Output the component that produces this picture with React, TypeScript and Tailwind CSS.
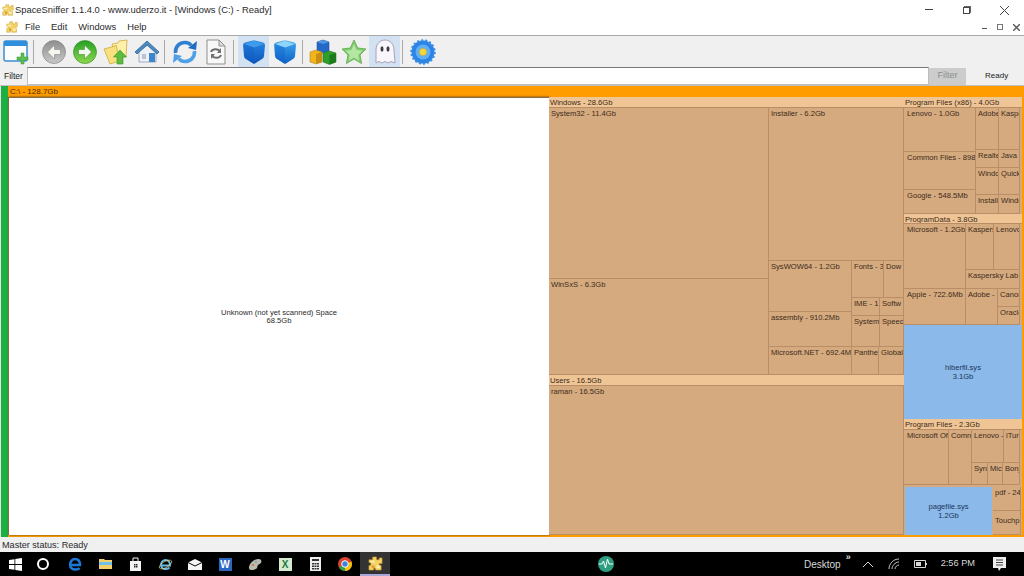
import React from "react";

const Puzzle = ({ size = 16 }: { size?: number }) => (
  <svg width={size} height={size} viewBox="0 0 16 16">
    <path d="M5 1h4v3h3V2h3v6h-3v2h2v5H8v-2H6v2H1v-5h2V7H1V4h4z" fill="#f4d264" stroke="#c9972a" strokeWidth="0.6" />
    <path d="M2 5h5v2H2zM9 10h4v3H9z" fill="#fdf0b0" />
    <path d="M4 10h3v3H4z" fill="#d8a030" />
  </svg>
);

const NewWindowIcon = () => (
  <svg width="26" height="26" viewBox="0 0 26 26">
    <rect x="1" y="2" width="23" height="20" rx="2" fill="#fdfdff" stroke="#3b8fd2" strokeWidth="1.5" />
    <rect x="1" y="2" width="23" height="5" rx="1" fill="#2f8fdc" />
    <path d="M18 14h3v4h4v3h-4v4h-3v-4h-4v-3h4z" fill="#5cc14e" stroke="#2f9030" strokeWidth="0.5" />
  </svg>
);

const ArrowCircle = ({ id, light, dark, ring, dir }: { id: string; light: string; dark: string; ring: string; dir: "l" | "r" }) => (
  <svg width="24" height="24" viewBox="0 0 24 24">
    <defs>
      <linearGradient id={id} x1="0" y1="0" x2="0" y2="1">
        <stop offset="0" stopColor={dark} />
        <stop offset="1" stopColor={light} />
      </linearGradient>
    </defs>
    <circle cx="12" cy="12" r="11.5" fill={`url(#${id})`} stroke={ring} strokeWidth="0.6" />
    <path d={dir === "l" ? "M12.5 5L5.5 12l7 7v-4.500H18.5v-5H12.5z" : "M11.5 5l7 7-7 7v-4.500H5.5v-5h6z"} fill="#f4f6f0" stroke={ring} strokeWidth="0.5" />
  </svg>
);

const FolderUp = () => (
  <svg width="26" height="26" viewBox="0 0 26 26">
    <path d="M9 5l6-1 1-2 8-1-1 17H12z" fill="#fdf0a8" stroke="#cfa93f" strokeWidth="0.8" />
    <path d="M1 10l11-3 1-1 4 16-10 3z" fill="#f9e07e" stroke="#cfa93f" strokeWidth="0.8" />
    <path d="M17 11l6.5 7H20v7h-6v-7h-3.500z" fill="#5cbc40" stroke="#3b942c" strokeWidth="0.6" />
  </svg>
);

const HomeIcon = () => (
  <svg width="26" height="24" viewBox="0 0 26 24">
    <path d="M5 11l9-6 8 6v11H5z" fill="#eef1f6" stroke="#8c9cb2" strokeWidth="0.8" />
    <path d="M1 12L13 1l12 11-2 2L13 5 3 14z" fill="#4d8ac0" stroke="#2f6596" strokeWidth="0.8" />
    <path d="M8 14h4v5H8z" fill="#b9c4d0" />
    <path d="M15 13h6v9h-6z" fill="#3d86cc" />
  </svg>
);

const RefreshIcon = () => (
  <svg width="26" height="26" viewBox="0 0 26 26" fill="none">
    <path d="M3.5 14C3 7 8 3.5 13 3.5c3 0 5 1 6 3" stroke="#2f7fd0" strokeWidth="3.6" />
    <path d="M25 2l-1 9-8-2z" fill="#1f6cc0" />
    <path d="M22.5 12c.5 7-4.500 10.500-9.500 10.500-3 0-5-1-6-3" stroke="#4f9fe6" strokeWidth="3.6" />
    <path d="M1 24l1-9 8 2z" fill="#4f9fe6" />
  </svg>
);

const DocRefresh = () => (
  <svg width="22" height="26" viewBox="0 0 22 26" fill="none">
    <path d="M2 1h12l6 6v18H2z" fill="#f8f8f8" stroke="#8f8f8f" />
    <path d="M14 1v6h6z" fill="#ddd" stroke="#8f8f8f" />
    <path d="M6 13c1-3 6-4 9-1M16 16c-1 3-6 4-9 1" stroke="#6f6f6f" strokeWidth="2" />
    <path d="M16 9v5h-4zM6 20v-5h4z" fill="#6f6f6f" />
  </svg>
);

const Cube = ({ id, top, mid, low }: { id: string; top: string; mid: string; low: string }) => (
  <svg width="24" height="26" viewBox="0 0 24 26">
    <defs>
      <linearGradient id={id} x1="0" y1="0" x2="0" y2="1">
        <stop offset="0" stopColor={mid} />
        <stop offset="1" stopColor={low} />
      </linearGradient>
    </defs>
    <path d="M1 6Q1 4 3 3.5L11 1.5Q12 1.3 13 1.5L21 3.5Q23 4 23 6L22 17Q22 19 20 20L13 24.5Q12 25 11 24.5L4 20Q2 19 2 17z" fill={`url(#${id})`} />
    <path d="M2 5L12 1.8 22 5 12 8.5z" fill={top} />
    <path d="M12 8.5V24.5L4 20Q2.5 19 2.5 17L2 5z" fill="#0f5fc6" fillOpacity="0.35" />
  </svg>
);

const BoxesIcon = () => (
  <svg width="28" height="26" viewBox="0 0 28 26">
    <path d="M8 3l6-2 6 2v9l-6 2-6-2z" fill="#2468c8" stroke="#17488c" strokeWidth="0.5" />
    <path d="M8 3l6 2 6-2-6-2z" fill="#4f96e4" />
    <path d="M1 13l6-2 6 2v10l-6 2-6-2z" fill="#f0b41c" stroke="#a87a10" strokeWidth="0.5" />
    <path d="M7 15l6-2v10l-6 2z" fill="#c98e10" />
    <path d="M14 14l6.5-2L27 14v9l-6.500 2.500L14 23z" fill="#2f9f2a" stroke="#1c6a18" strokeWidth="0.5" />
    <path d="M20.5 16L27 14v9l-6.500 2.500z" fill="#1c7a1c" />
  </svg>
);

const StarIcon = () => (
  <svg width="26" height="25" viewBox="0 0 26 25">
    <path d="M13 1l3.7 8 8.3 1-6 6 1.6 8.5L13 20l-7.600 4.500L7 16 1 10l8.300-1z" fill="#7ecb70" stroke="#6fb35e" strokeLinejoin="round" />
    <path d="M13 5l2.6 6 5.9.7-4.300 4.100 1.100 6L13 18.500l-5.300 3.300 1.100-6-4.300-4.100 5.900-.7z" fill="#b6e6a4" />
  </svg>
);

const GhostIcon = () => (
  <svg width="22" height="26" viewBox="0 0 22 26">
    <path d="M2 24V11C2 5 6 1 11 1s9 4 9 10l1 13-4-1.500-3 1.500-3-1.500-3 1.500-3-1.500z" fill="#f8f6fb" stroke="#a8a2b8" />
    <ellipse cx="8" cy="10" rx="1.5" ry="2.8" fill="#3a3a44" />
    <ellipse cx="14" cy="10" rx="1.5" ry="2.8" fill="#3a3a44" />
  </svg>
);

const FlowerIcon = () => (
  <svg width="26" height="26" viewBox="0 0 26 26">
    <circle cx="13" cy="13" r="11.5" fill="#2b84e6" />
    <circle cx="13" cy="13" r="11.5" fill="none" stroke="#3a8ee6" strokeWidth="2.5" strokeDasharray="2 2" />
    <circle cx="13" cy="13" r="7.5" fill="#62aef2" />
    <circle cx="13" cy="13" r="3.6" fill="#f6d83a" stroke="#d8a520" strokeWidth="0.5" />
  </svg>
);

const Btn = ({ children, active }: { children: React.ReactNode; active?: boolean }) => (
  <div className={active ? "w-[31px] h-[31px] flex items-center justify-center bg-[#d2e2f2]" : "w-[31px] h-[31px] flex items-center justify-center"}>
    {children}
  </div>
);

const Sep = () => <div className="w-px h-[24px] ml-[2px] mr-[4px] bg-[#a9a9a9]" />;

const Cell = ({ label, className }: { label: string; className: string }) => (
  <div className={`${className} shrink-0 border-r border-b border-[#b98e66] bg-[#d6aa7f] pl-[2px] text-[7.6px] leading-[11px] text-[#3a2a1a] overflow-hidden whitespace-nowrap`}>
    {label}
  </div>
);

const Head = ({ label, className }: { label: string; className: string }) => (
  <div className={`${className} shrink-0 border-b border-[#b98e66] bg-[#f0c595] pl-px text-[7.6px] leading-[11px] text-[#3a2a1a] overflow-hidden whitespace-nowrap`}>
    {label}
  </div>
);

const FileBlock = ({ name, size, className }: { name: string; size: string; className: string }) => (
  <div className={`${className} shrink-0 flex flex-col items-center justify-center bg-[#8ab9ea] text-[7.6px] leading-[9px] text-[#1d3557]`}>
    <span>{name}</span>
    <span>{size}</span>
  </div>
);

const WindowsBlock = () => (
  <div className="w-[355px] flex flex-col bg-[#d6aa7f]">
    <Head label="Windows - 28.6Gb" className="h-[11px]" />
    <div className="flex h-[267px]">
      <div className="w-[220px] flex flex-col">
        <Cell label="System32 - 11.4Gb" className="h-[171px]" />
        <Cell label="WinSxS - 6.3Gb" className="h-[96px]" />
      </div>
      <div className="w-[135px] flex flex-col">
        <Cell label="Installer - 6.2Gb" className="h-[153px]" />
        <div className="flex h-[114px]">
          <div className="w-[83px] flex flex-col">
            <Cell label="SysWOW64 - 1.2Gb" className="h-[51px]" />
            <Cell label="assembly - 910.2Mb" className="h-[35px]" />
            <Cell label="Microsoft.NET - 692.4Mb" className="h-[28px]" />
          </div>
          <div className="w-[52px] flex flex-col">
            <div className="flex h-[37px]">
              <Cell label="Fonts - 3" className="w-[32px]" />
              <Cell label="Dow" className="w-[20px]" />
            </div>
            <div className="flex h-[18px]">
              <Cell label="IME - 1" className="w-[28px]" />
              <Cell label="Softw" className="w-[24px]" />
            </div>
            <div className="flex h-[31px]">
              <Cell label="System" className="w-[28px]" />
              <Cell label="Speec" className="w-[24px]" />
            </div>
            <div className="flex h-[28px]">
              <Cell label="Panthe" className="w-[27px]" />
              <Cell label="Global" className="w-[25px]" />
            </div>
          </div>
        </div>
      </div>
    </div>
    <Head label="Users - 16.5Gb" className="h-[11px]" />
    <Cell label="raman - 16.5Gb" className="h-[149px]" />
  </div>
);

const SideBlock = () => (
  <div className="w-[118px] flex flex-col bg-[#d6aa7f]">
    <Head label="Program Files (x86) - 4.0Gb" className="h-[11px] pl-[2px]" />
    <div className="flex h-[106px]">
      <div className="w-[72px] flex flex-col">
        <Cell label="Lenovo - 1.0Gb" className="h-[44px] pl-[3px]" />
        <Cell label="Common Files - 898" className="h-[38px] pl-[3px]" />
        <Cell label="Google - 548.5Mb" className="h-[24px] pl-[3px]" />
      </div>
      <div className="w-[44px] flex flex-col">
        <div className="flex h-[42px]">
          <Cell label="Adobe" className="w-[23px]" />
          <Cell label="Kaspe" className="w-[21px]" />
        </div>
        <div className="flex h-[18px]">
          <Cell label="Realte" className="w-[23px]" />
          <Cell label="Java -" className="w-[21px]" />
        </div>
        <div className="flex h-[27px]">
          <Cell label="Windov" className="w-[23px]" />
          <Cell label="Quick" className="w-[21px]" />
        </div>
        <div className="flex h-[19px]">
          <Cell label="InstallS" className="w-[23px]" />
          <Cell label="Windc" className="w-[21px]" />
        </div>
      </div>
    </div>
    <Head label="ProgramData - 3.8Gb" className="h-[10px] pl-[2px]" />
    <div className="flex h-[101px]">
      <div className="w-[62px] flex flex-col">
        <Cell label="Microsoft - 1.2Gb" className="h-[65px] pl-[3px]" />
        <Cell label="Apple - 722.6Mb" className="h-[36px] pl-[3px]" />
      </div>
      <div className="w-[54px] flex flex-col">
        <div className="flex h-[46px]">
          <Cell label="Kaspers" className="w-[28px]" />
          <Cell label="Lenovo" className="w-[26px]" />
        </div>
        <Cell label="Kaspersky Lab :" className="h-[19px]" />
        <div className="flex h-[36px]">
          <Cell label="Adobe -" className="w-[32px]" />
          <div className="w-[22px] flex flex-col">
            <Cell label="Canor" className="h-[18px]" />
            <Cell label="Oracle" className="h-[18px]" />
          </div>
        </div>
      </div>
    </div>
    <FileBlock name="hiberfil.sys" size="3.1Gb" className="h-[94px]" />
    <Head label="Program Files - 2.3Gb" className="h-[11px] pl-[2px]" />
    <div className="flex h-[55px]">
      <Cell label="Microsoft Of" className="w-[45px] pl-[3px]" />
      <Cell label="Comn" className="w-[23px]" />
      <div className="w-[48px] flex flex-col">
        <div className="flex h-[33px]">
          <Cell label="Lenovo -" className="w-[32px]" />
          <Cell label="iTur" className="w-[16px]" />
        </div>
        <div className="flex h-[22px]">
          <Cell label="Syn" className="w-[16px]" />
          <Cell label="Mic" className="w-[15px]" />
          <Cell label="Bonj" className="w-[17px]" />
        </div>
      </div>
    </div>
    <div className="flex h-[50px] pt-[2px] pl-px">
      <FileBlock name="pagefile.sys" size="1.2Gb" className="w-[87px]" />
      <div className="w-[28px] ml-px flex flex-col">
        <Cell label="pdf - 24" className="h-[24px]" />
        <div className="h-[24px] border-r border-b border-[#b98e66] pt-[4px] pl-[2px] text-[7.6px] leading-[11px] text-[#3a2a1a] overflow-hidden whitespace-nowrap">Touchp</div>
      </div>
    </div>
  </div>
);

const Taskbar = () => (
  <div className="h-[24px] flex items-center bg-black text-[#d8d8d8]">
    <div className="w-[30px] flex justify-center">
      <svg width="13" height="13" viewBox="0 0 13 13"><path d="M0 2l5.5-.8V6H0zM6.3 1L13 0v6H6.3zM0 7h5.5v4.8L0 11zM6.3 7H13v6l-6.7-1z" fill="#fff" /></svg>
    </div>
    <div className="w-[30px] flex justify-center">
      <div className="w-[12px] h-[12px] mr-[4px] rounded-full border-2 border-white" />
    </div>
    <div className="w-[30px] flex justify-center">
      <svg width="14" height="14" viewBox="0 0 14 14" fill="none"><path d="M2 8h10C12 4 10 2 7 2 4 2 2 5 2 8c0 3 3 5 6 4.5 1.5 0 3-.7 3.5-1.5" stroke="#1a78d8" strokeWidth="2.5" /></svg>
    </div>
    <div className="w-[30px] flex justify-center">
      <svg width="13" height="12" viewBox="0 0 13 12"><path d="M0 1h5l1 1h7v9H0z" fill="#f2cf6a" /><path d="M0 4h13v3H0z" fill="#6fc0e8" /></svg>
    </div>
    <div className="w-[30px] flex justify-center">
      <svg width="13" height="14" viewBox="0 0 13 14"><path d="M1 4h11v10H1z" fill="#f4f4f4" /><path d="M4 4V1h5v3" fill="none" stroke="#f4f4f4" /><path d="M5 7h1.5v1.5H5zM7 7h1.5v1.5H7zM5 9h1.5v1.5H5zM7 9h1.5v1.5H7z" fill="#222" /></svg>
    </div>
    <div className="w-[30px] flex justify-center">
      <svg width="15" height="15" viewBox="0 0 15 15" fill="none"><path d="M3 8.5h9C12 5 10 3 7.5 3 5 3 3 5 3 8c0 3 2.5 4.5 5 4 1.5 0 3-.7 3.5-1.5" stroke="#62b8e8" strokeWidth="2" /><ellipse cx="7.5" cy="7.5" rx="7" ry="3" transform="rotate(-30 7.5 7.5)" stroke="#e6cf60" strokeWidth="0.7" /></svg>
    </div>
    <div className="w-[30px] flex justify-center">
      <svg width="14" height="11" viewBox="0 0 14 11"><path d="M0 3.5L7 0l7 3.5V11H0z" fill="#f4f4f4" /><path d="M0 3.5L7 7l7-3.5" fill="none" stroke="#000" /></svg>
    </div>
    <div className="w-[30px] flex justify-center">
      <div className="w-[13px] h-[13px] flex items-center justify-center bg-[#2b66c0] text-[10px] font-bold text-white">W</div>
    </div>
    <div className="w-[30px] flex justify-center">
      <svg width="14" height="14" viewBox="0 0 14 14"><path d="M1 11C1 6 6 2 11 2c2 0 3 2 2 4-1 1-2 1-3 2s0 3-2 4-7 2-7-1z" fill="#b9b9ad" /><circle cx="5" cy="8" r="1" fill="#d86a3a" /><circle cx="8" cy="5" r="1" fill="#58a6d8" /></svg>
    </div>
    <div className="w-[30px] flex justify-center">
      <div className="w-[13px] h-[13px] flex items-center justify-center bg-[#d5ead0] text-[10px] font-bold text-[#1f7a3d]">X</div>
    </div>
    <div className="w-[30px] flex justify-center">
      <svg width="11" height="14" viewBox="0 0 11 14"><path d="M0 0h11v14H0z" fill="#eee" /><path d="M2 2h7v2H2z" fill="#333" /><path d="M2 6h2v1.5H2zM4.5 6h2v1.5h-2zM7 6h2v1.5H7zM2 8.5h2V10H2zM4.5 8.5h2V10h-2zM7 8.5h2V10H7zM2 11h2v1.5H2zM4.5 11h2v1.5h-2zM7 11h2v1.5H7z" fill="#333" /></svg>
    </div>
    <div className="w-[30px] flex justify-center">
      <svg width="14" height="14" viewBox="0 0 14 14"><circle cx="7" cy="7" r="7" fill="#d9432f" /><path d="M7 7L1 10.5A7 7 0 0 0 7 14z" fill="#2f9e44" /><path d="M7 7l6.5-2.5A7 7 0 0 1 7 14z" fill="#f4c20d" /><circle cx="7" cy="7" r="3.3" fill="#3f82d8" stroke="#fff" strokeWidth="1" /></svg>
    </div>
    <div className="w-[30px] h-[24px] flex items-center justify-center bg-[#333333] border-b-2 border-[#a8a8d8]">
      <Puzzle size={15} />
    </div>
    <div className="w-[32px] ml-[200px] flex justify-center">
      <svg width="16" height="16" viewBox="0 0 16 16" fill="none"><circle cx="8" cy="8" r="8" fill="#2f9e80" /><path d="M1 8h3l1.5-3 2 7 2-9 1.5 5h4" stroke="#fff" strokeWidth="1" /></svg>
    </div>
    <span className="ml-[182px] text-[10px]">Desktop</span>
    <span className="ml-[5px] mb-[14px] text-[9px] leading-[9px] font-bold">»</span>
    <svg className="ml-[11px]" width="12" height="7" viewBox="0 0 12 7" fill="none"><path d="M1 6l5-5 5 5" stroke="#d8d8d8" /></svg>
    <svg className="ml-[14px]" width="12" height="12" viewBox="0 0 12 12" fill="none" stroke="#c8c8c8"><path d="M1 11C1 6 5 1 11 1M4 11c0-3 3-7 7-7M7 11c0-2 2-4 4-4" /></svg>
    <svg className="ml-[14px]" width="13" height="8" viewBox="0 0 13 8"><path d="M.5.5h11v7H.5z" fill="none" stroke="#d8d8d8" /><path d="M2 2h5v4H2z" fill="#d8d8d8" /><path d="M12 3h1v2h-1z" fill="#d8d8d8" /></svg>
    <span className="ml-[14px] text-[9.2px]">2:56 PM</span>
    <svg className="ml-[18px]" width="13" height="14" viewBox="0 0 13 14"><path d="M0 0h13v11H8l-2 3-1-3H0z" fill="#eee" /><path d="M3 3h7M3 5.5h7M3 8h7" stroke="#444" /></svg>
  </div>
);

export default function App() {
  return (
    <div className="w-[1024px] h-[576px] flex flex-col overflow-hidden bg-white font-['Liberation_Sans',sans-serif]">
      <div className="h-[18px] pt-[2px] flex items-center">
        <div className="w-[15px] flex justify-center"><Puzzle size={12} /></div>
        <span className="text-[9.4px] text-[#2a2a2a]">SpaceSniffer 1.1.4.0 - www.uderzo.it - [Windows (C:) - Ready]</span>
        <span className="ml-auto mr-[30px] mb-[1px] w-[8px] h-px bg-[#444]" />
        <span className="mr-[30px] w-[7px] h-[7px] border border-[#444] shadow-[1px_-1px_0_#666]" />
        <svg className="mr-[15px]" width="9" height="9" viewBox="0 0 9 9" stroke="#444"><path d="M0 0l9 9M9 0L0 9" /></svg>
      </div>
      <div className="h-[18px] pt-px flex items-center border-b border-[#a9a9a9]">
        <div className="w-[24px] flex justify-center"><Puzzle size={12} /></div>
        <span className="ml-px text-[9.4px] text-[#2a2a2a]">File</span>
        <span className="ml-[11px] text-[9.4px] text-[#2a2a2a]">Edit</span>
        <span className="ml-[11px] text-[9.4px] text-[#2a2a2a]">Windows</span>
        <span className="ml-[11px] text-[9.4px] text-[#2a2a2a]">Help</span>
        <span className="ml-auto mr-[10px] w-[5px] h-px mt-[3px] bg-[#555]" />
        <span className="mr-[10px] w-[6px] h-[6px] border border-[#777]" />
        <svg className="mr-[4px]" width="7" height="7" viewBox="0 0 7 7" stroke="#555" strokeWidth="1.3"><path d="M0 0l7 7M7 0L0 7" /></svg>
      </div>
      <div className="h-[31px] flex items-center bg-[#f0f0f0]">
        <Btn><NewWindowIcon /></Btn>
        <Sep />
        <Btn><ArrowCircle id="arrow-back" light="#c8c8c8" dark="#8e8e8e" ring="#7a7a7a" dir="l" /></Btn>
        <Btn><ArrowCircle id="arrow-next" light="#8ed84e" dark="#24a024" ring="#2a8a22" dir="r" /></Btn>
        <Btn><FolderUp /></Btn>
        <Btn><HomeIcon /></Btn>
        <Sep />
        <Btn><RefreshIcon /></Btn>
        <Btn><DocRefresh /></Btn>
        <Sep />
        <Btn active><Cube id="cube-a" top="#3f9cec" mid="#2a86e0" low="#0c56bc" /></Btn>
        <Btn><Cube id="cube-b" top="#8fd4fa" mid="#3fa6ee" low="#0f62c8" /></Btn>
        <Sep />
        <Btn><BoxesIcon /></Btn>
        <Btn><StarIcon /></Btn>
        <Btn active><GhostIcon /></Btn>
        <Sep />
        <Btn><FlowerIcon /></Btn>
      </div>
      <div className="h-[19px] flex items-center bg-[#f0f0f0] border-b border-[#c0c0c0]">
        <span className="w-[27px] pl-[4px] text-[8.5px] text-[#222]">Filter</span>
        <div className="w-[902px] h-[18px] bg-white border border-[#bdbdbd] border-t-[#777]" />
        <div className="w-[37px] h-[17px] flex items-center justify-center bg-[#cccccc] text-[9px] text-[#8c8c8c]">Filter</div>
        <span className="ml-[19px] text-[8px] text-[#222]">Ready</span>
      </div>
      <div className="h-[451px] flex bg-[#ff9c00]">
        <div className="w-px bg-[#e8e8e8]" />
        <div className="w-[7px] bg-[#1cb043]" />
        <div className="flex-1 flex flex-col">
          <div className="h-[11px] pl-[2px] text-[8px] leading-[11px] text-[#4a2c00]">C:\ - 128.7Gb</div>
          <div className="h-[438px] flex">
            <div className="w-[541px] flex flex-col items-center justify-center bg-white border-l border-t border-[#8a6a40] shadow-[1px_0_2px_#4a3a20] text-[7.6px] leading-[8px] text-[#2a2a2a]">
              <span>Unknown (not yet scanned) Space</span>
              <span>68.5Gb</span>
            </div>
            <WindowsBlock />
            <SideBlock />
          </div>
        </div>
      </div>
      <div className="h-[15px] pt-[2px] flex items-center pl-[2px] bg-[#f0f0f0] text-[9.1px] text-[#2a2a2a]">Master status: Ready</div>
      <Taskbar />
    </div>
  );
}
